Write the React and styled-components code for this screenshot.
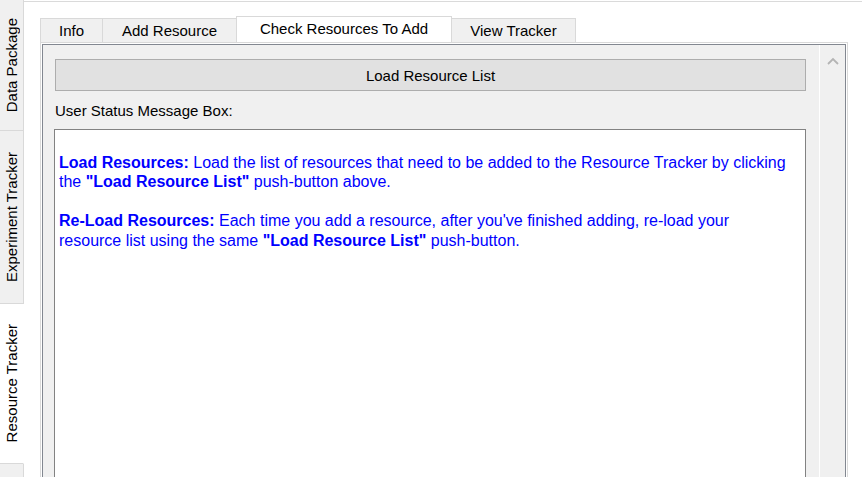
import React from "react";
import styled, { createGlobalStyle } from "styled-components";

const GlobalStyle = createGlobalStyle`
  html, body {
    margin: 0;
    padding: 0;
    background: #fff;
    overflow: hidden;
  }
  body {
    font-family: "Liberation Sans", Arial, sans-serif;
  }
`;

const Window = styled.div`
  display: flex;
  align-items: flex-start;
  width: 862px;
  height: 477px;
  overflow: hidden;
  background: #fff;
`;

/* left vertical tab bar */
const SideBar = styled.div`
  width: 24px;
  flex: none;
  display: flex;
  flex-direction: column;
`;

const SideTab = styled.div`
  height: ${(p) => p.$h}px;
  flex: none;
  box-sizing: border-box;
  background: ${(p) => (p.$active ? "#fff" : "#f0f0f0")};
  border-right: 1px solid ${(p) => (p.$active ? "#fff" : "#d9d9d9")};
  border-bottom: 1px solid #d9d9d9;
  display: flex;
  align-items: center;
  justify-content: center;

  span {
    writing-mode: vertical-rl;
    transform: rotate(180deg);
    font-size: 15px;
    color: #000;
    white-space: nowrap;
  }
`;

/* main page */
const Main = styled.div`
  flex: 1;
  min-width: 0;
  margin-top: 1px;
  border-top: 1px solid #dadada;
  padding: 14px 14px 0 16px;
  display: flex;
  flex-direction: column;
`;

const TabBar = styled.div`
  display: flex;
  align-items: flex-end;
  height: 26px;
  flex: none;
`;

const Tab = styled.div`
  box-sizing: border-box;
  width: ${(p) => p.$w}px;
  height: ${(p) => (p.$active ? 26 : 24)}px;
  margin-left: -1px;
  border: 1px solid #d9d9d9;
  border-bottom: none;
  background: ${(p) => (p.$active ? "#fff" : "#f0f0f0")};
  display: flex;
  align-items: center;
  justify-content: center;
  padding-bottom: ${(p) => (p.$active ? 2 : 0)}px;
  font-size: 15px;
  color: #000;
  white-space: nowrap;

  &:first-child {
    margin-left: 0;
  }
`;

const Pane = styled.div`
  flex: none;
  display: flex;
  border: 1px solid #d9d9d9;
  background: #fff;
  padding: 1px;
`;

const ScrollFrame = styled.div`
  flex: 1;
  display: flex;
  border: 1px solid #828790;
  background: #f0f0f0;
  min-width: 0;
`;

const Content = styled.div`
  flex: 1;
  padding: 14px 13px 0 12px;
  display: flex;
  flex-direction: column;
`;

const ScrollBar = styled.div`
  width: 25px;
  flex: none;
  border-left: 1px solid #fff;
  background: #f0f0f0;
  display: flex;
  justify-content: center;
  align-items: flex-start;
  padding-top: 12px;
`;

const PushButton = styled.div`
  height: 32px;
  flex: none;
  box-sizing: border-box;
  border: 1px solid #adadad;
  background: #e1e1e1;
  display: flex;
  align-items: center;
  justify-content: center;
  font-size: 15px;
  color: #000;
`;

const FieldLabel = styled.div`
  flex: none;
  margin-top: 11px;
  margin-bottom: 9px;
  height: 18px;
  line-height: 18px;
  font-size: 15px;
  color: #000;
`;

const MessageBox = styled.div`
  height: 420px;
  flex: none;
  margin-left: -1px;
  border: 1px solid #828282;
  background: #fff;
  padding: 3px 4px;
  font-size: 16px;
  line-height: 19.5px;
  color: #0000ff;
`;

const Para = styled.p`
  margin: 19.5px 0 0;
  white-space: nowrap;

  b {
    font-weight: 700;
  }
`;

const sideTabs = [
  { label: "Data Package", h: 131 },
  { label: "Experiment Tracker", h: 173 },
  { label: "Resource Tracker", h: 160, active: true },
  { label: "", h: 100 },
];

const tabs = [
  { label: "Info", w: 63 },
  { label: "Add Resource", w: 135 },
  { label: "Check Resources To Add", w: 216, active: true },
  { label: "View Tracker", w: 125 },
];

const App = () => {
  return (
    <Window>
      <GlobalStyle />
      <SideBar>
        {sideTabs.map((t, i) => (
          <SideTab key={i} $h={t.h} $active={t.active}>
            <span>{t.label}</span>
          </SideTab>
        ))}
      </SideBar>

      <Main>
        <TabBar>
          {tabs.map((t) => (
            <Tab key={t.label} $w={t.w} $active={t.active}>
              {t.label}
            </Tab>
          ))}
        </TabBar>

        <Pane>
          <ScrollFrame>
            <Content>
              <PushButton>Load Resource List</PushButton>
              <FieldLabel>User Status Message Box:</FieldLabel>
              <MessageBox>
                <Para>
                  <b>Load Resources:</b> Load the list of resources that need to
                  be added to the Resource Tracker by clicking
                  <br />
                  the <b>"Load Resource List"</b> push-button above.
                </Para>
                <Para>
                  <b>Re-Load Resources:</b> Each time you add a resource, after
                  you've finished adding, re-load your
                  <br />
                  resource list using the same <b>"Load Resource List"</b>{" "}
                  push-button.
                </Para>
              </MessageBox>
            </Content>
            <ScrollBar>
              <svg width="12" height="8" viewBox="0 0 12 8">
                <polyline
                  points="1,7 6,2 11,7"
                  fill="none"
                  stroke="#b4b4b4"
                  strokeWidth="1.8"
                />
              </svg>
            </ScrollBar>
          </ScrollFrame>
        </Pane>
      </Main>
    </Window>
  );
};

export default App;
